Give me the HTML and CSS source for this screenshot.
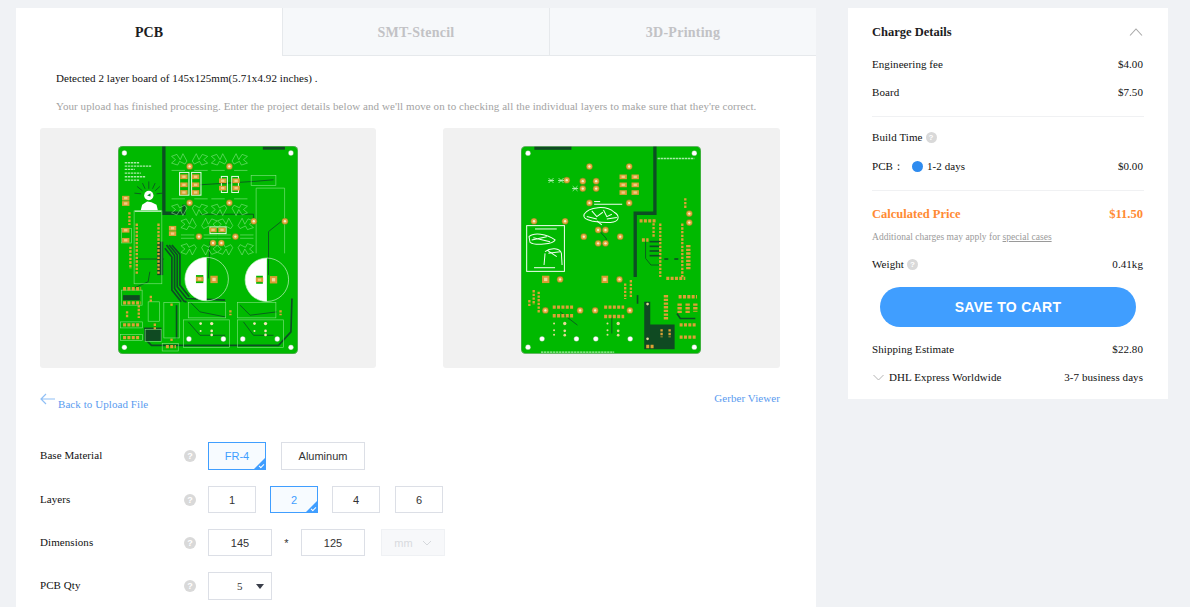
FILE: index.html
```html
<!DOCTYPE html>
<html lang="en">
<head>
<meta charset="utf-8">
<title>PCB Quote</title>
<link rel="stylesheet" href="styles.css">
</head>
<body>
<div class="page">
  <main class="main">
    <div class="tabs">
      <div class="tab tab-active">PCB</div>
      <div class="tab">SMT-Stencil</div>
      <div class="tab">3D-Printing</div>
    </div>
    <p class="detected">Detected 2 layer board of 145x125mm(5.71x4.92 inches) .</p>
    <p class="note">Your upload has finished processing. Enter the project details below and we'll move on to checking all the individual layers to make sure that they're correct.</p>

    <div class="previews">
      <div class="preview">
        <svg class="board" viewBox="235 64 538 622" width="180" height="208">
          <defs>
            <g id="pad"><circle r="10" fill="#7f8f22"/><circle r="8" fill="#e3a83a"/><circle r="3.5" fill="#f8ecc8"/></g>
            <g id="hole"><circle r="8" fill="#9fd09f"/><circle r="6.5" fill="#fff"/></g>
            <g id="fan" class="silk">
              <polyline points="-54,-30 -38,-36 -28,-20 -20,-38 -8,-16 -14,-7 -30,-15 -36,-4 -54,-10"/>
              <polyline points="54,-30 38,-36 28,-20 20,-38 8,-16 14,-7 30,-15 36,-4 54,-10"/>
              <polyline points="-54,-30 -42,-20 -54,-10"/>
              <polyline points="54,-30 42,-20 54,-10"/>
              <line x1="-54" y1="12" x2="-14" y2="12"/>
              <line x1="54" y1="12" x2="14" y2="12"/>
            </g>
            <g id="smd"><rect x="-11" y="-7" width="22" height="14" fill="#dca136"/><rect x="-5" y="-3.5" width="10" height="7" fill="#f0cc82"/></g>
          </defs>
          <rect class="pcb" x="235" y="64" width="538" height="622" rx="14"/>

          <g class="dark">
            <polyline points="372,64 372,265 432,265 432,240"/>
            <polyline class="thin" points="388,360 412,390 412,485 440,520 555,525"/>
            <polyline class="thin" points="380,360 404,392 404,490 432,528 440,530"/>
            <polyline class="thin" points="396,360 420,388 420,480 448,515"/>
            <polyline class="thin" points="375,370 396,396 396,495 424,530"/>
            <polyline class="hair" points="290,402 372,402"/>
            <polyline class="hair" points="480,180 640,170 700,165"/>
            <polyline class="hair" points="480,268 640,268 640,285"/>
            <polyline class="hair" points="685,450 685,320 735,280"/>
            <polyline class="hair" points="510,350 505,460"/>
            <polyline class="hair" points="330,440 325,470 280,490"/>
            <polyline class="thin" points="755,520 752,620 715,660 335,660 315,640"/>
            <polyline class="hair" points="445,590 480,630 555,630"/>
            <polyline class="hair" points="610,590 640,630 700,630"/>
            <polyline class="hair" points="450,530 480,560 555,575"/>
            <polyline class="hair" points="600,540 630,570 710,560"/>
            <polyline class="thin" points="410,540 410,640"/>
          </g>
          <rect class="block" x="352" y="350" width="18" height="100"/>
          <rect class="block" x="313" y="607" width="52" height="40"/>
          <rect class="block" x="250" y="510" width="50" height="15"/>
          <rect class="block" x="668" y="66" width="66" height="9"/>

          <g class="white-lines">
            <line x1="255" y1="114" x2="300" y2="114"/>
            <line x1="255" y1="124" x2="335" y2="124"/>
            <line x1="255" y1="134" x2="285" y2="134"/>
            <line x1="255" y1="145" x2="303" y2="145"/>
            <line x1="255" y1="156" x2="318" y2="156"/>
            <line x1="255" y1="166" x2="300" y2="166"/>
          </g>
          <g class="rays">
            <line x1="327" y1="192" x2="327" y2="170"/><line x1="316" y1="192" x2="308" y2="175"/>
            <line x1="338" y1="192" x2="346" y2="175"/><line x1="308" y1="198" x2="292" y2="185"/>
            <line x1="346" y1="198" x2="360" y2="185"/><line x1="304" y1="207" x2="284" y2="205"/>
            <line x1="350" y1="207" x2="368" y2="205"/>
          </g>
          <circle cx="327" cy="212" r="14" fill="#fff"/>
          <path d="M303 256 L307 240 L322 230 L335 232 L350 240 L354 256 Z" fill="#fff"/>
          <path d="M322 212 L332 205 L332 215 Z" fill="#0b8a2a"/>

          <g class="silk">
            <rect x="283" y="258" width="83" height="218"/>
            <rect x="245" y="310" width="30" height="44"/>
            <rect x="245" y="495" width="62" height="45"/>
            <rect x="325" y="530" width="34" height="58"/>
            <rect x="372" y="532" width="46" height="106"/>
            <rect x="445" y="532" width="112" height="46"/>
            <rect x="592" y="532" width="115" height="46"/>
            <rect x="431" y="584" width="137" height="82"/>
            <rect x="592" y="584" width="138" height="82"/>
            <rect x="633" y="152" width="74" height="30"/>
            <polyline points="648,385 648,190 733,190 733,385"/>
            <rect x="316" y="612" width="48" height="36"/>
            <rect x="367" y="655" width="48" height="22"/>
            <rect x="242" y="590" width="66" height="18"/>
            <rect x="242" y="628" width="66" height="18"/>
          </g>
          <line class="bright" x1="285" y1="259" x2="364" y2="259"/>
          <rect class="bright" x="419" y="143" width="28" height="68"/>
          <rect class="bright" x="455" y="143" width="28" height="68"/>
          <rect class="bright" x="544" y="155" width="18" height="48"/>
          <rect class="bright" x="575" y="155" width="20" height="48"/>
          <rect class="bright" x="510" y="306" width="48" height="20"/>

          <use href="#fan" x="449" y="125"/><use href="#fan" x="568" y="125"/>
          <use href="#fan" x="449" y="255" transform="matrix(1 0 0 -1 0 489)"/>
          <use href="#fan" x="568" y="255" transform="matrix(1 0 0 -1 0 489)"/>
          <use href="#fan" x="477" y="318"/><use href="#fan" x="586" y="318"/>
          <use href="#fan" x="477" y="352" transform="matrix(1 0 0 -1 0 704)"/>
          <use href="#fan" x="586" y="352" transform="matrix(1 0 0 -1 0 704)"/>

          <use href="#pad" x="449" y="125"/><use href="#pad" x="568" y="125"/>
          <use href="#pad" x="449" y="234"/><use href="#pad" x="568" y="234"/>
          <use href="#pad" x="477" y="335"/><use href="#pad" x="586" y="335"/>
          <use href="#pad" x="641" y="289"/><use href="#pad" x="734" y="289"/>
          <use href="#pad" x="519" y="354"/><use href="#pad" x="544" y="354"/>
          <use href="#smd" x="432" y="156"/><use href="#smd" x="432" y="180"/><use href="#smd" x="432" y="203"/>
          <use href="#smd" x="467" y="156"/><use href="#smd" x="467" y="180"/><use href="#smd" x="467" y="203"/>
          <use href="#smd" x="548" y="168"/><use href="#smd" x="548" y="190"/>
          <use href="#smd" x="588" y="168"/><use href="#smd" x="588" y="190"/>
          <use href="#smd" x="519" y="315"/><use href="#smd" x="546" y="315"/>
          <use href="#smd" x="398" y="310"/><use href="#smd" x="398" y="326"/>
          <use href="#smd" x="258" y="316"/><use href="#smd" x="258" y="346"/>
          <use href="#smd" x="258" y="220"/><use href="#smd" x="258" y="236"/>

          <line class="pins" x1="291" y1="296" x2="291" y2="448"/>
          <line class="pins" x1="356" y1="296" x2="356" y2="448"/>
          <line class="pins" x1="272" y1="365" x2="272" y2="432"/>
          <line class="pins pins-h" x1="250" y1="491" x2="304" y2="491"/>
          <line class="pins pins-h" x1="250" y1="533" x2="304" y2="533"/>
          <line class="pins" x1="269" y1="262" x2="269" y2="300"/>
          <line class="pins pins-h" x1="250" y1="599" x2="302" y2="599"/>
          <line class="pins pins-h" x1="250" y1="637" x2="302" y2="637"/>
          <line class="pins" x1="262" y1="558" x2="262" y2="580"/>
          <line class="pins" x1="297" y1="540" x2="297" y2="578"/>
          <line class="pins" x1="345" y1="595" x2="345" y2="612"/>
          <line class="pins" x1="333" y1="512" x2="333" y2="530"/>
          <line class="pins" x1="395" y1="535" x2="395" y2="545"/>
          <line class="pins pins-h" x1="378" y1="664" x2="408" y2="664"/>
          <line class="pins" x1="395" y1="640" x2="395" y2="648"/>
          <line class="pins" x1="571" y1="555" x2="571" y2="570"/>
          <line class="pins" x1="721" y1="555" x2="721" y2="570"/>

          <path d="M500 397 A65 65 0 0 0 500 527 Z" fill="#fff"/>
          <circle class="cap" cx="500" cy="462" r="65"/>
          <path d="M680 399 A65 65 0 0 0 680 529 Z" fill="#fff"/>
          <circle class="cap" cx="680" cy="464" r="65"/>
          <rect x="468" y="450" width="22" height="24" fill="#00b900"/>
          <rect x="648" y="452" width="20" height="24" fill="#00b900"/>
          <use href="#smd" x="479" y="462"/><use href="#smd" x="658" y="464"/>
          <rect x="511" y="452" width="22" height="22" fill="#d89d32"/><rect x="517" y="458" width="10" height="10" fill="#f1d79a"/>
          <rect x="689" y="453" width="22" height="22" fill="#d89d32"/><rect x="695" y="459" width="10" height="10" fill="#f1d79a"/>

          <circle cx="482" cy="595" r="4" fill="#f3e6b8"/><circle cx="515" cy="595" r="5" fill="#f3e6b8"/>
          <circle cx="482" cy="617" r="3" fill="#f3e6b8"/><circle cx="515" cy="617" r="4" fill="#f3e6b8"/><circle cx="515" cy="629" r="4" fill="#f3e6b8"/>
          <circle cx="643" cy="595" r="4" fill="#f3e6b8"/><circle cx="676" cy="595" r="5" fill="#f3e6b8"/>
          <circle cx="643" cy="617" r="3" fill="#f3e6b8"/><circle cx="676" cy="617" r="4" fill="#f3e6b8"/><circle cx="676" cy="629" r="4" fill="#f3e6b8"/>
          <use href="#hole" x="447" y="641"/><use href="#hole" x="550" y="641"/>
          <use href="#hole" x="608" y="641"/><use href="#hole" x="711" y="641"/>
          <use href="#hole" x="254" y="85"/><use href="#hole" x="752" y="85"/>
          <use href="#hole" x="254" y="666"/><use href="#hole" x="752" y="666"/>
          <rect class="edge" x="235.5" y="64.5" width="537" height="621" rx="14"/>
        </svg>
      </div>

      <div class="preview">
        <svg class="board board-back" viewBox="243 64 539 622" width="180" height="208">
          <rect class="pcb" x="243" y="64" width="539" height="622" rx="14"/>
          <rect class="block" x="283" y="65" width="111" height="10"/>
          <g class="dark">
            <polyline points="644,64 644,265 585,265 585,456"/>
            <line class="thin" x1="672" y1="402" x2="684" y2="402"/>
            <line class="thin" x1="702" y1="402" x2="714" y2="402"/>
            <polyline class="thin" points="628,350 660,350"/>
            <polyline class="thin" points="628,364 660,364"/>
            <polyline class="thin" points="628,378 660,378"/>
            <polyline class="thin" points="628,392 660,392"/>
            <polyline class="hair" points="616,350 616,400 632,420 660,420"/>
            <polyline class="thin" points="592,510 592,536"/>
            <polyline class="hair" points="360,560 412,600"/>
            <polyline class="hair" points="515,575 515,625"/>
            <polyline class="thin" points="710,565 720,580 765,580"/>
            <polyline class="hair" points="475,315 498,340 498,355"/>
          </g>
          <path class="block" d="M612 530 H630 V598 H703 V672 H612 Z"/>
          <line class="white-lines" x1="652" y1="101" x2="762" y2="101"/>
          <line class="white-lines" x1="303" y1="681" x2="522" y2="681"/>

          <use href="#pad" x="448" y="125"/><use href="#pad" x="567" y="125"/>
          <use href="#pad" x="448" y="234"/><use href="#pad" x="567" y="234"/>
          <use href="#pad" x="282" y="289"/><use href="#pad" x="375" y="289"/>
          <use href="#pad" x="431" y="335"/><use href="#pad" x="540" y="335"/>
          <use href="#pad" x="360" y="463"/><use href="#pad" x="538" y="463"/>
          <g class="pad-s">
            <use href="#pad" x="474" y="315"/><use href="#pad" x="496" y="315"/>
            <use href="#pad" x="474" y="355"/><use href="#pad" x="496" y="355"/>
            <use href="#pad" x="428" y="169"/><use href="#pad" x="468" y="169"/>
            <use href="#pad" x="428" y="191"/><use href="#pad" x="468" y="191"/>
            <use href="#pad" x="380" y="166"/><use href="#pad" x="316" y="556"/>
            <use href="#pad" x="420" y="556"/><use href="#pad" x="465" y="556"/><use href="#pad" x="569" y="556"/>
            <use href="#pad" x="747" y="266"/><use href="#pad" x="747" y="293"/>
          </g>
          <use href="#smd" x="549" y="156"/><use href="#smd" x="585" y="156"/>
          <use href="#smd" x="549" y="180"/><use href="#smd" x="585" y="180"/>
          <use href="#smd" x="549" y="203"/><use href="#smd" x="585" y="203"/>
          <rect x="306" y="452" width="22" height="22" fill="#d89d32"/><rect x="312" y="458" width="10" height="10" fill="#f1d79a"/>
          <rect x="484" y="452" width="20" height="22" fill="#d89d32"/><rect x="489" y="458" width="10" height="10" fill="#f1d79a"/>
          <g class="bright-soft">
            <path d="M326 160 L340 174 M340 160 L326 174 M324 167 H342"/>
            <path d="M356 160 L370 174 M370 160 L356 174 M354 167 H372"/>
            <path d="M398 184 L412 198 M412 184 L398 198 M396 191 H414"/>
          </g>

          <g class="bright-thin">
            <path d="M432 268 C445 245 500 240 522 262 C540 272 536 288 520 291 C495 296 470 290 455 288 C440 284 428 280 432 268 Z"/>
            <path d="M455 258 L470 275 L488 262 M490 255 L500 275 L515 268 M470 288 L485 300 M440 275 L470 282 M500 282 L530 278"/>
            <line x1="462" y1="230" x2="480" y2="230"/><line x1="462" y1="238" x2="546" y2="238"/>
            <rect x="260" y="302" width="113" height="137"/>
            <path d="M267 335 C280 322 320 325 345 345 C340 358 285 362 270 352 Z M280 338 L330 350 M275 345 L320 335"/>
            <path d="M315 380 C330 368 360 368 364 385 L366 420 M312 420 L315 385 M322 376 L350 395 M325 385 L360 380"/>
            <line x1="285" y1="312" x2="350" y2="312"/><line x1="282" y1="428" x2="345" y2="428"/>
          </g>

          <line class="pins" x1="660" y1="296" x2="660" y2="456"/>
          <line class="pins" x1="726" y1="296" x2="726" y2="456"/>
          <line class="pins wide" x1="744" y1="360" x2="744" y2="436"/>
          <line class="pins" x1="572" y1="465" x2="572" y2="520"/>
          <line class="pins" x1="555" y1="475" x2="555" y2="522"/>
          <line class="pins" x1="281" y1="495" x2="281" y2="540"/>
          <line class="pins" x1="296" y1="500" x2="296" y2="566"/>
          <line class="pins" x1="268" y1="525" x2="268" y2="545"/>
          <line class="pins pins-h" x1="338" y1="546" x2="402" y2="546"/>
          <line class="pins pins-h" x1="338" y1="572" x2="402" y2="572"/>
          <line class="pins pins-h" x1="492" y1="546" x2="552" y2="546"/>
          <line class="pins pins-h" x1="492" y1="574" x2="552" y2="574"/>
          <line class="pins wide" x1="677" y1="510" x2="677" y2="585"/>
          <line class="pins wide" x1="718" y1="535" x2="718" y2="565"/>
          <line class="pins wide" x1="742" y1="535" x2="742" y2="565"/>
          <line class="pins wide" x1="765" y1="535" x2="765" y2="560"/>
          <line class="pins pins-h" x1="715" y1="515" x2="770" y2="515"/>
          <line class="pins pins-h" x1="718" y1="599" x2="770" y2="599"/>
          <line class="pins pins-h" x1="718" y1="636" x2="770" y2="636"/>
          <line class="pins pins-h" x1="598" y1="288" x2="650" y2="288"/>
          <line class="pins" x1="640" y1="295" x2="640" y2="335"/>
          <line class="pins pins-h" x1="678" y1="460" x2="735" y2="460"/>
          <line class="pins" x1="735" y1="220" x2="735" y2="252"/>
          <line class="pins pins-h" x1="605" y1="345" x2="625" y2="345"/>
          <line class="pins" x1="664" y1="612" x2="664" y2="636"/>
          <line class="pins" x1="688" y1="612" x2="688" y2="636"/>
          <line class="pins pins-h" x1="618" y1="664" x2="640" y2="664"/>

          <circle cx="342" cy="595" r="3" fill="#e5d998"/><circle cx="342" cy="615" r="3" fill="#e5d998"/><circle cx="342" cy="629" r="3" fill="#e5d998"/>
          <circle cx="374" cy="595" r="5" fill="#e5d998"/><circle cx="374" cy="617" r="4" fill="#e5d998"/><circle cx="374" cy="630" r="4" fill="#e5d998"/>
          <circle cx="502" cy="595" r="3" fill="#e5d998"/><circle cx="502" cy="615" r="3" fill="#e5d998"/><circle cx="502" cy="629" r="3" fill="#e5d998"/>
          <circle cx="534" cy="595" r="5" fill="#e5d998"/><circle cx="534" cy="617" r="4" fill="#e5d998"/><circle cx="534" cy="630" r="4" fill="#e5d998"/>
          <circle cx="622" cy="537" r="4" fill="#e5d998"/><circle cx="622" cy="641" r="4" fill="#e5d998"/>
          <use href="#hole" x="306" y="641"/><use href="#hole" x="409" y="641"/>
          <use href="#hole" x="467" y="641"/><use href="#hole" x="570" y="641"/>
          <use href="#hole" x="264" y="85"/><use href="#hole" x="762" y="85"/>
          <use href="#hole" x="264" y="666"/><use href="#hole" x="762" y="666"/>
          <rect class="edge" x="243.5" y="64.5" width="538" height="621" rx="14"/>
        </svg>
      </div>
    </div>

    <div class="links">
      <a class="back">
        <svg class="back-arrow" viewBox="0 0 15 13" width="15" height="13"><path d="M6 1 L1 6 L6 11 M1 6 H15"/></svg>
        <span class="back-text">Back to Upload File</span>
      </a>
      <a class="gerber">Gerber Viewer</a>
    </div>

    <div class="form">
      <div class="row row-first">
        <span class="label">Base Material</span><span class="help">?</span>
        <div class="opts">
          <div class="opt opt-fr opt-on">FR-4</div>
          <div class="opt opt-al">Aluminum</div>
        </div>
      </div>
      <div class="row">
        <span class="label">Layers</span><span class="help">?</span>
        <div class="opts opts-layers">
          <div class="opt opt-n">1</div>
          <div class="opt opt-n opt-on">2</div>
          <div class="opt opt-n">4</div>
          <div class="opt opt-n opt-last">6</div>
        </div>
      </div>
      <div class="row">
        <span class="label">Dimensions</span><span class="help">?</span>
        <div class="opts">
          <div class="opt opt-dim">145</div>
          <span class="times">*</span>
          <div class="opt opt-dim">125</div>
          <div class="opt opt-dim opt-unit">mm
            <svg class="unit-chev" viewBox="0 0 10 6" width="10" height="6"><path d="M1 1 L5 5 L9 1"/></svg>
          </div>
        </div>
      </div>
      <div class="row row-qty">
        <span class="label">PCB Qty</span><span class="help">?</span>
        <div class="opts">
          <div class="opt opt-dim opt-qty"><span class="qty-val">5</span><span class="caret"></span></div>
        </div>
      </div>
    </div>
  </main>

  <aside class="side">
    <div class="line line-head">
      <strong class="head">Charge Details</strong>
      <svg class="chev-up" viewBox="0 0 14 8" width="14" height="8"><path d="M1 7.5 L7 1 L13 7.5"/></svg>
    </div>
    <div class="line l-eng"><span>Engineering fee</span><span>$4.00</span></div>
    <div class="line l-board"><span>Board</span><span>$7.50</span></div>
    <hr class="rule rule-1">
    <div class="line l-build"><span class="inline">Build Time <span class="help help-s">?</span></span></div>
    <div class="line l-pcb">
      <span class="inline"><span class="pcb-name">PCB：</span><span class="dot"></span>1-2 days</span>
      <span>$0.00</span>
    </div>
    <hr class="rule rule-2">
    <div class="line l-price"><strong>Calculated Price</strong><strong>$11.50</strong></div>
    <div class="extra">Additional charges may apply for <u>special cases</u></div>
    <div class="line l-weight"><span class="inline">Weight <span class="help help-s">?</span></span><span>0.41kg</span></div>
    <div class="save">SAVE TO CART</div>
    <div class="line l-ship"><span>Shipping Estimate</span><span>$22.80</span></div>
    <div class="line l-dhl">
      <span class="inline"><svg class="chev-down" viewBox="0 0 11 7" width="11" height="7"><path d="M.5 1 L5.5 6 L10.5 1"/></svg>DHL Express Worldwide</span>
      <span>3-7 business days</span>
    </div>
  </aside>
</div>
</body>
</html>
```

FILE: styles.css
```css
* { box-sizing: border-box; }
html, body { margin: 0; height: 607px; overflow: hidden; }
body {
  background: #f0f2f5;
  font-family: "Liberation Serif", "Times New Roman", serif;
  font-size: 11px;
  letter-spacing: .07px;
  color: #111;
}
.page {
  display: flex;
  align-items: flex-start;
  gap: 32px;
  padding: 8px 0 0 16px;
}

/* main panel */
.main { width: 800px; height: 620px; background: #fff; flex: none; }
.tabs { display: flex; height: 48px; }
.tab {
  flex: 1;
  display: flex;
  align-items: center;
  justify-content: center;
  padding-top: 2px;
  background: #f6f8fa;
  border-bottom: 1px solid #e6e9ec;
  border-left: 1px solid #e6e9ec;
  color: #c2c2c5;
  font-size: 14px;
  font-weight: bold;
  letter-spacing: .25px;
}
.tab-active { background: #fff; color: #1c1c22; border: 0; padding-top: 1px; letter-spacing: 0; }
.detected { margin: 0; padding: 15px 0 0 40px; line-height: 14px; color: #111; }
.note { margin: 14px 0 0; padding-left: 40px; line-height: 14px; color: #a3a3a3; }
.previews { display: flex; gap: 67px; margin: 15px 0 0 24px; }
.preview {
  width: 336px;
  height: 240px;
  padding-top: 4px;
  background: #f1f1f1;
  border-radius: 3px;
  display: flex;
  align-items: center;
  justify-content: center;
}
.preview + .preview { width: 337px; }
.board { display: block; filter: blur(.35px); }
.board-back { margin-right: 1px; }

/* board artwork */
.pcb { fill: #00b900; }
.edge { fill: none; stroke: #8aa88a; stroke-width: 2; }
.dark polyline, .dark line { fill: none; stroke: #0c4f23; stroke-width: 10; }
.dark .thin { stroke-width: 5; }
.dark .hair { stroke-width: 2.5; }
.block { fill: #0f4a22; }
.silk, .silk rect, .silk polyline, .silk line { fill: none; stroke: #86e486; stroke-width: 1.8; }
.bright { fill: none; stroke: #e6fbe6; stroke-width: 3; }
.bright-thin { fill: none; stroke: #f2fff2; stroke-width: 3; }
.bright-soft { fill: none; stroke: #c9f5c9; stroke-width: 2.5; }
.white-lines line, line.white-lines { stroke: #a8eca8; stroke-width: 4; stroke-dasharray: 7 2; }
.rays line { stroke: #0c4f23; stroke-width: 2.5; }
.pins { stroke: #dca136; stroke-width: 7; stroke-dasharray: 7 4; }
.pins.wide { stroke-width: 13; }
.pins-h { stroke-width: 10; stroke-dasharray: 9 4; }
.cap { fill: none; stroke: #c9f5c9; stroke-width: 2; }

/* links */
.links { display: flex; justify-content: space-between; padding: 24px 36px 0 24px; height: 64px; color: #5a9bef; }
.back { display: flex; align-items: flex-start; }
.back-arrow { fill: none; stroke: #90bff5; stroke-width: 1.2; margin-top: 1px; margin-right: 3px; }
.back-text { padding-top: 6px; }
.gerber { padding-top: 0; line-height: 13px; }

/* form */
.form { padding-left: 24px; }
.row { display: flex; align-items: center; margin-bottom: 16px; font-size: 11px; }
.row-first { margin-top: 10px; }
.label { width: 144px; color: #111; margin-top: -2px; }
.help {
  width: 12px;
  height: 12px;
  border-radius: 50%;
  background: #d9d9d9;
  color: #fff;
  font: bold 9px/12px "Liberation Sans", Arial, sans-serif;
  text-align: center;
  flex: none;
}
.opts { display: flex; align-items: center; margin-left: 12px; }
.opt {
  position: relative;
  height: 28px;
  display: flex;
  align-items: center;
  justify-content: center;
  border: 1px solid #dcdfe6;
  background: #fff;
  color: #333;
  font: 11px "Liberation Sans", Arial, sans-serif;
  letter-spacing: 0;
}
.opt-fr { width: 58px; margin-right: 15px; }
.opt-al { width: 84px; }
.opt-n { width: 48px; height: 27px; margin-right: 14px; }
.opt-n + .opt-n + .opt-n { margin-right: 15px; }
.opt-n.opt-last { margin-right: 0; }
.opt-dim { width: 64px; height: 27px; }
.opt-on { border-color: #409eff; background: #f7fbff; color: #409eff; }
.opt-on::after {
  content: "";
  position: absolute;
  right: 0;
  bottom: 0;
  width: 0;
  height: 0;
  border-style: solid;
  border-width: 0 0 11px 11px;
  border-color: transparent transparent #409eff transparent;
}
.opt-on::before {
  content: "";
  position: absolute;
  right: 1px;
  bottom: 2px;
  width: 4px;
  height: 2px;
  border-left: 1px solid #fff;
  border-bottom: 1px solid #fff;
  transform: rotate(-45deg);
  z-index: 1;
}
.times { width: 29px; text-align: center; font: 11px "Liberation Sans", Arial, sans-serif; color: #333; }
.opt-unit {
  margin-left: 16px;
  background: #f7f8fa;
  border-color: #eff1f4;
  color: #d8dade;
  gap: 9px;
}
.unit-chev { fill: none; stroke: #d5d8dc; stroke-width: 1; }
.row-qty .opt-qty { height: 28px; justify-content: flex-start; }
.qty-val { margin-left: 28px; font-family: "Liberation Serif", serif; font-size: 11px; }
.caret {
  margin-left: 13px;
  width: 0;
  height: 0;
  border-style: solid;
  border-width: 5px 4px 0 4px;
  border-color: #3a3f4a transparent transparent transparent;
}

/* charge panel */
.side {
  width: 320px;
  height: 391px;
  flex: none;
  background: #fff;
  padding: 0 24px 0 24px;
  display: flex;
  flex-direction: column;
}
.line { display: flex; justify-content: space-between; align-items: center; line-height: 14px; color: #111; padding-right: 1px; }
.inline { display: flex; align-items: center; }
.line-head { margin-top: 17px; }
.head { font-size: 12.5px; letter-spacing: 0; color: #1c1c22; }
.chev-up { fill: none; stroke: #a8a8a8; stroke-width: 1.1; }
.l-eng { margin-top: 18px; }
.l-board { margin-top: 14px; }
.rule { width: 100%; height: 1px; border: 0; margin: 0; background: #f0f1f3; flex: none; }
.rule-1 { margin-top: 17px; }
.l-build { margin-top: 13px; }
.help-s { margin-left: 3px; width: 11px; height: 11px; font-size: 8px; line-height: 11px; }
.l-pcb { margin-top: 15px; }
.pcb-name { width: 40px; }
.dot { width: 11px; height: 11px; border-radius: 50%; background: #2e8bef; margin-right: 4px; }
.rule-2 { margin-top: 17px; }
.l-price { margin-top: 16px; font-size: 12.5px; letter-spacing: 0; color: #ff8a33; }
.extra { margin-top: 9px; font-size: 9.5px; line-height: 14px; letter-spacing: .02px; color: #9a9a9a; }
.l-weight { margin-top: 13px; }
.save {
  width: 256px;
  height: 40px;
  margin: 16px 0 0 8px;
  border-radius: 20px;
  background: #409eff;
  color: #fff;
  font: bold 14px/40px "Liberation Sans", Arial, sans-serif;
  letter-spacing: .3px;
  text-align: center;
  flex: none;
}
.l-ship { margin-top: 15px; }
.l-dhl { margin-top: 14px; }
.chev-down { fill: none; stroke: #b4b4b4; stroke-width: 1; margin: 0 5px 0 1px; }
```
